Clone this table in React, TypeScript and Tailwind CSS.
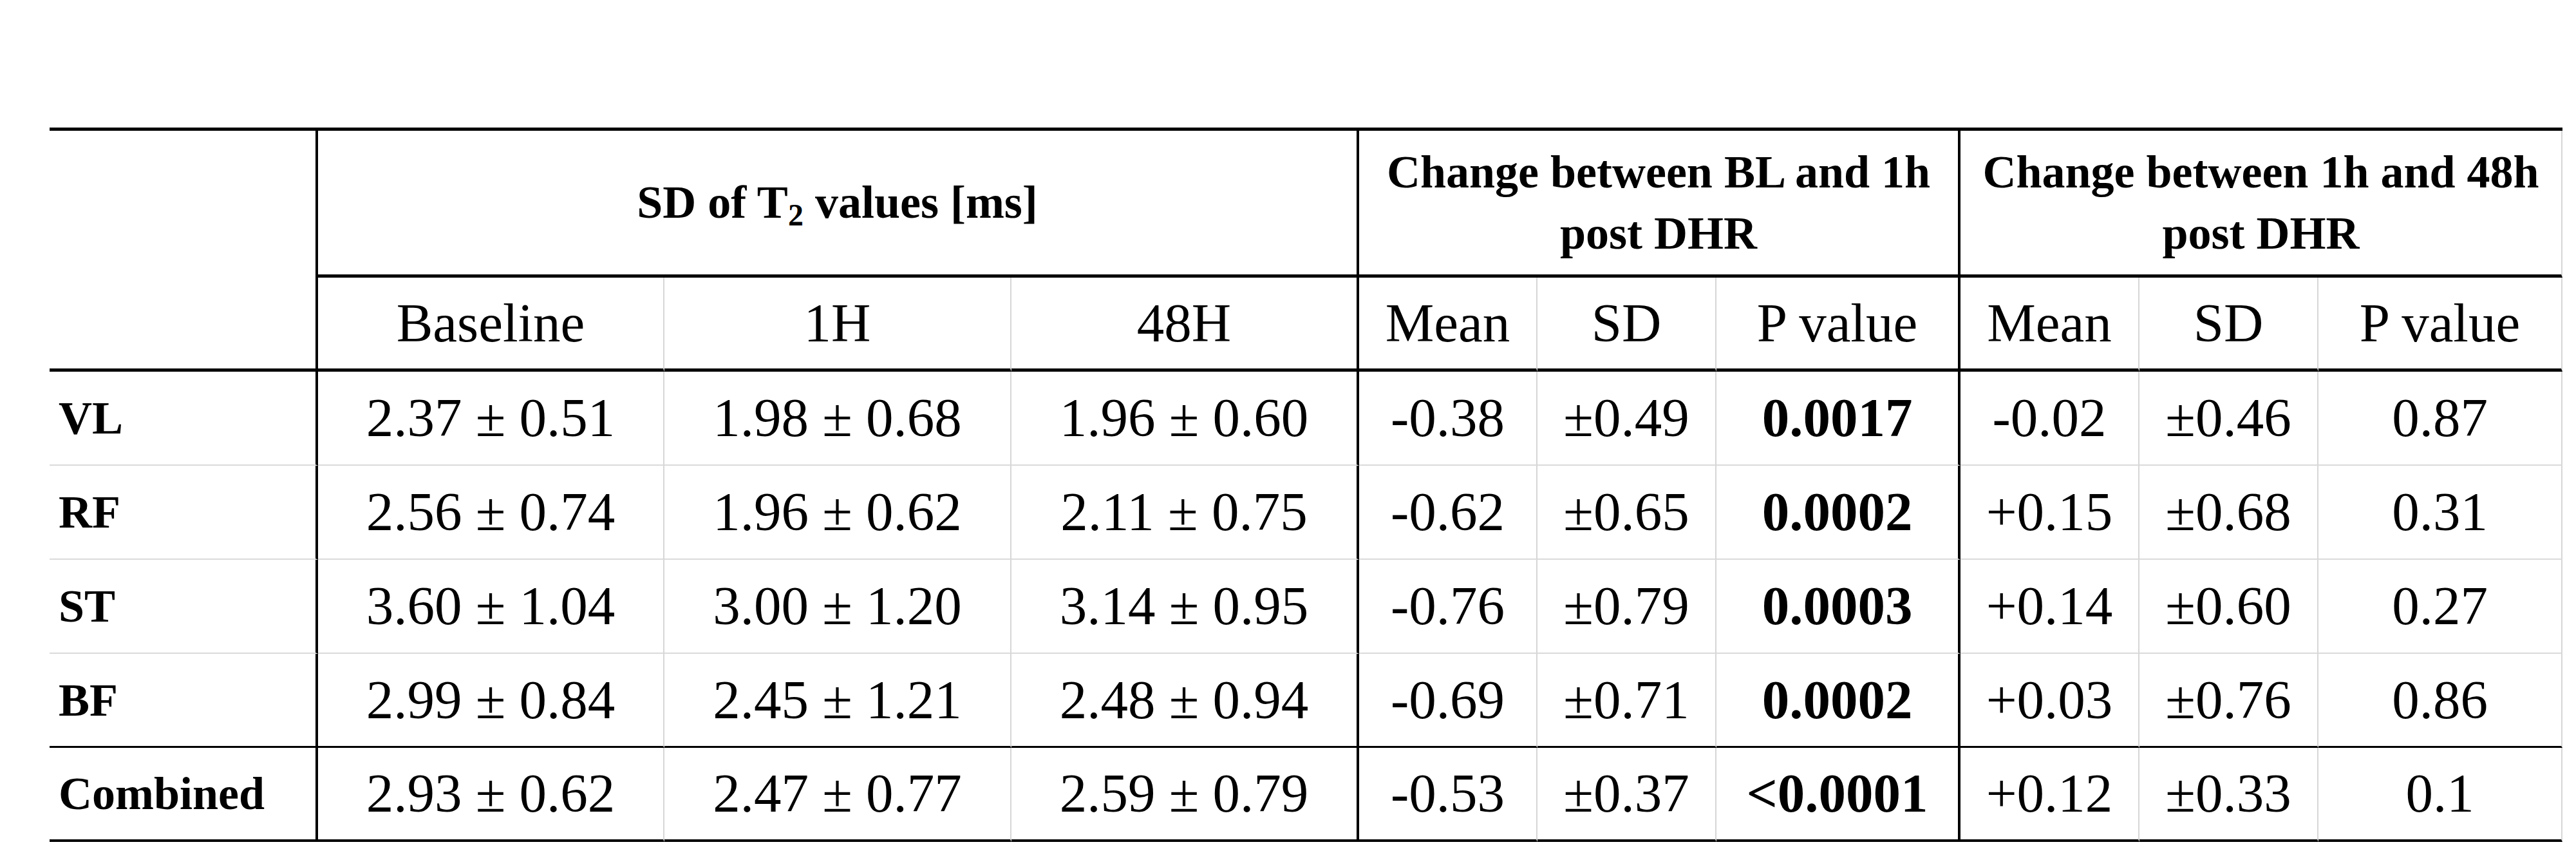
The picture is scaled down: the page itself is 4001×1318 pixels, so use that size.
const serif = "font-['Liberation_Serif','Times_New_Roman',serif] text-black";

type Row = {
  label: string;
  values: string[];
};

const rows: Row[] = [
  { label: "VL", values: ["2.37 ± 0.51", "1.98 ± 0.68", "1.96 ± 0.60", "-0.38", "±0.49", "0.0017", "-0.02", "±0.46", "0.87"] },
  { label: "RF", values: ["2.56 ± 0.74", "1.96 ± 0.62", "2.11 ± 0.75", "-0.62", "±0.65", "0.0002", "+0.15", "±0.68", "0.31"] },
  { label: "ST", values: ["3.60 ± 1.04", "3.00 ± 1.20", "3.14 ± 0.95", "-0.76", "±0.79", "0.0003", "+0.14", "±0.60", "0.27"] },
  { label: "BF", values: ["2.99 ± 0.84", "2.45 ± 1.21", "2.48 ± 0.94", "-0.69", "±0.71", "0.0002", "+0.03", "±0.76", "0.86"] },
  { label: "Combined", values: ["2.93 ± 0.62", "2.47 ± 0.77", "2.59 ± 0.79", "-0.53", "±0.37", "<0.0001", "+0.12", "±0.33", "0.1"] },
];

// column index (0-based among the 9 value columns) that ends a group -> black divider
const groupEnds = [2, 5];

const rightBorder = (i: number) =>
  groupEnds.includes(i) ? "border-r-4 border-r-black" : "border-r-2 border-r-[#d6d6d6]";

const bottomBorder = (rowIdx: number) => {
  if (rowIdx === rows.length - 1) return "border-b-4 border-b-black";
  if (rowIdx === rows.length - 2) return "border-b-[3px] border-b-black";
  return "border-b-2 border-b-[#dadada]";
};

const App = () => {
  return (
    <div className={`w-[4001px] h-[1318px] bg-white pt-[198px] pl-[77px] ${serif}`}>
      <div className="grid w-[3903px] grid-cols-[417px_538px_539px_540px_277px_278px_379px_278px_278px_379px] grid-rows-[228px_146px_146px_146px_146px_146px_146px] border-t-[5px] border-t-black">
        {/* header */}
        <div className="row-span-2 border-b-[5px] border-b-black border-r-4 border-r-black" />
        <div className="col-span-3 flex items-center justify-center border-b-[5px] border-b-black border-r-4 border-r-black text-[72px] font-bold leading-[95px]">
          <span>
            SD of T<sub className="text-[48px]">2</sub> values [ms]
          </span>
        </div>
        <div className="col-span-3 flex items-center justify-center border-b-[5px] border-b-black border-r-4 border-r-black text-center text-[72px] font-bold leading-[95px]">
          <span>
            Change between BL and 1h
            <br />
            post DHR
          </span>
        </div>
        <div className="col-span-3 flex items-center justify-center border-b-[5px] border-b-black border-r-2 border-r-[#d6d6d6] text-center text-[72px] font-bold leading-[95px]">
          <span>
            Change between 1h and 48h
            <br />
            post DHR
          </span>
        </div>

        {["Baseline", "1H", "48H", "Mean", "SD", "P value", "Mean", "SD", "P value"].map((h, i) => (
          <div
            key={"h" + i}
            className={`flex items-center justify-center border-b-[5px] border-b-black text-[85px] ${rightBorder(i)}`}
          >
            {h}
          </div>
        ))}

        {/* body */}
        {rows.map((row, r) => (
          <div key={row.label} className="contents">
            <div
              className={`flex items-center pl-[14px] text-[72px] font-bold ${bottomBorder(r)} border-r-4 border-r-black`}
            >
              {row.label}
            </div>
            {row.values.map((v, i) => (
              <div
                key={i}
                className={`flex items-center justify-center text-[85px] ${i === 5 ? "font-bold" : ""} ${bottomBorder(r)} ${rightBorder(i)}`}
              >
                {v}
              </div>
            ))}
          </div>
        ))}
      </div>
    </div>
  );
};

export default App;
